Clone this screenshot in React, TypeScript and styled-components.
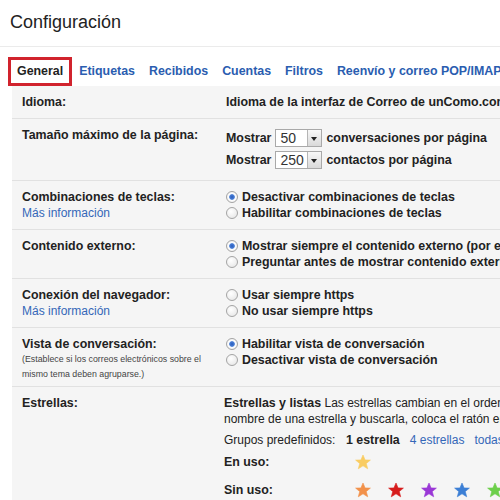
import React from 'react';
import styled, { createGlobalStyle } from 'styled-components';

const GlobalStyle = createGlobalStyle`
  body {
    margin: 0;
    background: #fff;
    color: #222;
    font-family: "Liberation Sans", Arial, sans-serif;
    overflow: hidden;
  }
`;

const Page = styled.div`
  width: 500px;
  height: 500px;
  overflow: hidden;
`;

const Header = styled.h1`
  margin: 0;
  height: 47px;
  box-sizing: border-box;
  padding: 11px 0 0 10px;
  font-size: 18px;
  font-weight: normal;
  line-height: 22px;
  border-bottom: 1px solid #ebebeb;
`;

const Tabs = styled.nav`
  display: flex;
  align-items: center;
  margin-top: 10px;
  padding-left: 8px;
  height: 29px;
  white-space: nowrap;
`;

const Tab = styled.span<{ $active?: boolean }>`
  box-sizing: border-box;
  height: 29px;
  line-height: ${(p) => (p.$active ? '23px' : '29px')};
  padding: ${(p) => (p.$active ? '0 6px' : '0 7px')};
  border: ${(p) => (p.$active ? '3px solid #d1232d' : 'none')};
  background: #fff;
  color: ${(p) => (p.$active ? '#222' : '#2a5db0')};
  font-size: 12.4px;
  font-weight: bold;
`;

const Panel = styled.section`
  margin-left: 12px;
  background: #f5f5f5;
  min-height: 420px;
`;

const Row = styled.div<{ $padBottom?: number }>`
  display: grid;
  grid-template-columns: 202px 1fr;
  padding: 8px 0 ${(p) => p.$padBottom ?? 8}px 10px;
  border-bottom: 1px solid #e1e1e1;
  font-size: 12.4px;
  line-height: 16px;
`;

const Label = styled.div`
  font-weight: bold;
  white-space: nowrap;
`;

const Value = styled.div`
  overflow: hidden;
  white-space: nowrap;
  font-weight: bold;
  padding-left: 2px;
`;

const MoreLink = styled.a`
  display: block;
  color: #3467b8;
  font-size: 12px;
  font-weight: normal;
  text-decoration: none;
`;

const Note = styled.div`
  font-size: 8.8px;
  line-height: 15px;
  font-weight: normal;
  color: #444;
`;

const Option = styled.label`
  display: flex;
  align-items: center;
  height: 16px;
`;

const RadioDot = styled.span<{ $checked?: boolean }>`
  flex-shrink: 0;
  box-sizing: border-box;
  width: 12px;
  height: 12px;
  margin-right: 4px;
  border-radius: 50%;
  border: 1px solid #a4a4a4;
  background: ${(p) =>
    p.$checked
      ? 'radial-gradient(circle, #2a5cbc 0, #4a7fd6 2.4px, #fff 3.2px, #e6e6e6 100%)'
      : 'radial-gradient(circle at 40% 35%, #fff 0, #e3e3e3 100%)'};
`;

const SelectLine = styled.div`
  display: flex;
  align-items: center;
  gap: 4px;
  height: 22px;
`;

const SelectBox = styled.span`
  display: flex;
  flex-shrink: 0;
  height: 18px;
  width: 47px;
  box-sizing: border-box;
  border: 1px solid #a9a9a9;
  background: #fff;
`;

const SelectValue = styled.span`
  flex: 1;
  padding-left: 4px;
  font-size: 14px;
  font-weight: normal;
  line-height: 17px;
  color: #333;
`;

const SelectArrow = styled.span`
  position: relative;
  width: 13px;
  border-left: 1px solid #b5b5b5;
  background: linear-gradient(#f8f8f8, #d9d9d9);

  &::after {
    content: '';
    position: absolute;
    left: 3px;
    top: 7px;
    border-left: 3.5px solid transparent;
    border-right: 3.5px solid transparent;
    border-top: 4px solid #222;
  }
`;

const Desc = styled.div`
  margin-left: -2px;
  font-size: 12px;
  line-height: 16px;
  font-weight: normal;
  b {
    font-size: 12.4px;
    font-weight: bold;
  }
`;

const StarGrid = styled.div`
  display: grid;
  grid-template-columns: 122px repeat(5, 33px);
  grid-template-rows: 22px 22px 34px;
  align-items: center;
  margin: 2px 0 0 -2px;
`;

const GroupLinks = styled.div`
  grid-column: 2 / -1;
  display: flex;
  gap: 10px;
  white-space: nowrap;
`;

const StarLabel = styled.span<{ $bold?: boolean }>`
  font-size: ${(p) => (p.$bold ? '12.4px' : '12px')};
  font-weight: ${(p) => (p.$bold ? 'bold' : 'normal')};
`;

const GroupLink = styled.a<{ $current?: boolean }>`
  color: ${(p) => (p.$current ? '#222' : '#3467b8')};
  font-size: ${(p) => (p.$current ? '12.4px' : '12px')};
  font-weight: ${(p) => (p.$current ? 'bold' : 'normal')};
  text-decoration: none;
`;

const StarCell = styled.span`
  display: flex;
  justify-content: center;
`;

const Star: React.FC<{ color: string }> = ({ color }) => (
  <StarCell>
    <svg width="16" height="16" viewBox="0 0 16 16">
      <polygon
        points="8,1 10.1,5.9 15.4,6.1 11.3,9.5 12.7,14.8 8,11.8 3.3,14.8 4.7,9.5 0.6,6.1 5.9,5.9"
        fill={color}
        stroke={color}
        strokeWidth="0.6"
        strokeLinejoin="round"
      />
    </svg>
  </StarCell>
);

const Radio: React.FC<{ checked?: boolean; children: React.ReactNode }> = ({ checked, children }) => (
  <Option>
    <RadioDot $checked={checked} />
    {children}
  </Option>
);

const Select: React.FC<{ value: string; children: React.ReactNode }> = ({ value, children }) => (
  <SelectLine>
    Mostrar
    <SelectBox>
      <SelectValue>{value}</SelectValue>
      <SelectArrow />
    </SelectBox>
    {children}
  </SelectLine>
);

export default function App() {
  return (
    <Page>
      <GlobalStyle />
      <Header>Configuración</Header>
      <Tabs>
        <Tab $active>General</Tab>
        <Tab>Etiquetas</Tab>
        <Tab>Recibidos</Tab>
        <Tab>Cuentas</Tab>
        <Tab>Filtros</Tab>
        <Tab>Reenvío y correo POP/IMAP</Tab>
      </Tabs>
      <Panel>
        <Row>
          <Label>Idioma:</Label>
          <Value>Idioma de la interfaz de Correo de unComo.com</Value>
        </Row>
        <Row $padBottom={9}>
          <Label>Tamaño máximo de la página:</Label>
          <Value>
            <Select value="50">conversaciones por página</Select>
            <Select value="250">contactos por página</Select>
          </Value>
        </Row>
        <Row>
          <Label>
            Combinaciones de teclas:
            <MoreLink>Más información</MoreLink>
          </Label>
          <Value>
            <Radio checked>Desactivar combinaciones de teclas</Radio>
            <Radio>Habilitar combinaciones de teclas</Radio>
          </Value>
        </Row>
        <Row>
          <Label>Contenido externo:</Label>
          <Value>
            <Radio checked>Mostrar siempre el contenido externo (por ejemplo, imágenes)</Radio>
            <Radio>Preguntar antes de mostrar contenido externo</Radio>
          </Value>
        </Row>
        <Row>
          <Label>
            Conexión del navegador:
            <MoreLink>Más información</MoreLink>
          </Label>
          <Value>
            <Radio>Usar siempre https</Radio>
            <Radio>No usar siempre https</Radio>
          </Value>
        </Row>
        <Row $padBottom={4}>
          <Label>
            Vista de conversación:
            <Note>
              (Establece si los correos electrónicos sobre el
              <br />
              mismo tema deben agruparse.)
            </Note>
          </Label>
          <Value>
            <Radio checked>Habilitar vista de conversación</Radio>
            <Radio>Desactivar vista de conversación</Radio>
          </Value>
        </Row>
        <Row>
          <Label>Estrellas:</Label>
          <Value>
            <Desc>
              <b>Estrellas y listas</b> Las estrellas cambian en el orden que se muestra a continuación cuando haces clic en ellas.
              <br />
              nombre de una estrella y buscarla, coloca el ratón encima de la imagen.
            </Desc>
            <StarGrid>
              <StarLabel>Grupos predefinidos:</StarLabel>
              <GroupLinks>
                <GroupLink $current>1 estrella</GroupLink>
                <GroupLink>4 estrellas</GroupLink>
                <GroupLink>todas las estrellas</GroupLink>
              </GroupLinks>
              <StarLabel $bold>En uso:</StarLabel>
              <Star color="#f9cc62" />
              <span />
              <span />
              <span />
              <span />
              <StarLabel $bold>Sin uso:</StarLabel>
              <Star color="#f2914a" />
              <Star color="#d61c1c" />
              <Star color="#9a37d6" />
              <Star color="#3c7fd5" />
              <Star color="#6ccf4a" />
            </StarGrid>
          </Value>
        </Row>
      </Panel>
    </Page>
  );
}
